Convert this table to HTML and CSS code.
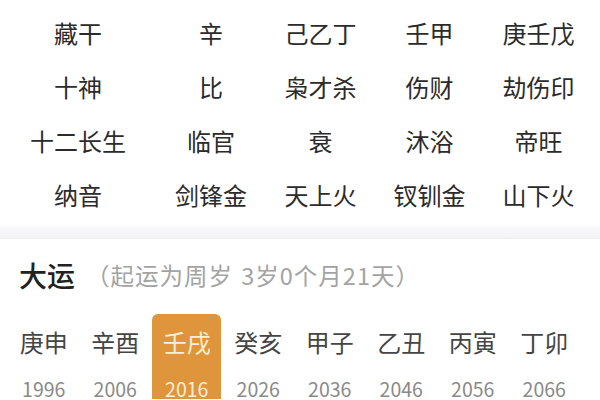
FILE: index.html
```html
<!DOCTYPE html>
<html lang="zh-CN">
<head>
<meta charset="utf-8">
<link rel="stylesheet" href="styles.css">
</head>
<body>
<div class="pillars">
  <div class="cell label">藏干</div><div class="cell">辛</div><div class="cell">己乙丁</div><div class="cell">壬甲</div><div class="cell">庚壬戊</div>
  <div class="cell label">十神</div><div class="cell">比</div><div class="cell">枭才杀</div><div class="cell">伤财</div><div class="cell">劫伤印</div>
  <div class="cell label">十二长生</div><div class="cell">临官</div><div class="cell">衰</div><div class="cell">沐浴</div><div class="cell">帝旺</div>
  <div class="cell label">纳音</div><div class="cell">剑锋金</div><div class="cell">天上火</div><div class="cell">钗钏金</div><div class="cell">山下火</div>
</div>
<div class="divider"></div>
<section class="dayun">
  <div class="dayun-head">
    <span class="dayun-title">大运</span>
    <span class="dayun-note">（起运为周岁 3岁0个月21天）</span>
  </div>
  <div class="dayun-list">
    <div class="dy"><div class="gz">庚申</div><div class="yr">1996</div></div>
    <div class="dy"><div class="gz">辛酉</div><div class="yr">2006</div></div>
    <div class="dy active"><div class="gz">壬戌</div><div class="yr">2016</div></div>
    <div class="dy"><div class="gz">癸亥</div><div class="yr">2026</div></div>
    <div class="dy"><div class="gz">甲子</div><div class="yr">2036</div></div>
    <div class="dy"><div class="gz">乙丑</div><div class="yr">2046</div></div>
    <div class="dy"><div class="gz">丙寅</div><div class="yr">2056</div></div>
    <div class="dy"><div class="gz">丁卯</div><div class="yr">2066</div></div>
  </div>
</section>
</body>
</html>
```

FILE: styles.css
```css
html, body {
  margin: 0;
  padding: 0;
  background: #ffffff;
}
body {
  width: 600px;
  height: 400px;
  overflow: hidden;
  font-family: "Noto Sans CJK SC", "Noto Sans", sans-serif;
  color: #333333;
}
.pillars {
  display: grid;
  grid-template-columns: 156px 110px 109px 109px 109px;
  grid-auto-rows: 54px;
  padding-top: 5px;
}
.cell {
  display: flex;
  align-items: center;
  justify-content: center;
  font-size: 24px;
  color: #2b2b2b;
  white-space: nowrap;
}
.divider {
  height: 15px;
  margin-top: 2px;
  background: linear-gradient(#ffffff, #f7f7f9 40%, #f4f4f6);
  border-bottom: 1px solid #eeeef1;
}
.dayun {
  padding-top: 18px;
}
.dayun-head {
  display: flex;
  align-items: center;
  height: 36px;
  padding-left: 19px;
}
.dayun-title {
  font-size: 28px;
  font-weight: 500;
  color: #222222;
}
.dayun-note {
  margin-left: 11px;
  font-size: 23.5px;
  letter-spacing: 1px;
  word-spacing: 2px;
  color: #a3a3a3;
}
.dayun-list {
  display: grid;
  grid-template-columns: repeat(8, 71.5px);
  padding-left: 8px;
  margin-top: 21px;
}
.dy {
  justify-self: center;
  width: 69px;
  height: 85px;
  padding-top: 12px;
  box-sizing: border-box;
  text-align: center;
  border-radius: 6px 6px 0 0;
}
.gz {
  font-size: 24px;
  line-height: 32px;
  color: #454545;
}
.yr {
  margin-top: 22px;
  font-size: 19.5px;
  line-height: 18px;
  color: #8a8a8a;
}
.dy.active {
  background: #df953b;
}
.dy.active .gz,
.dy.active .yr {
  color: #fbeed6;
}
```
